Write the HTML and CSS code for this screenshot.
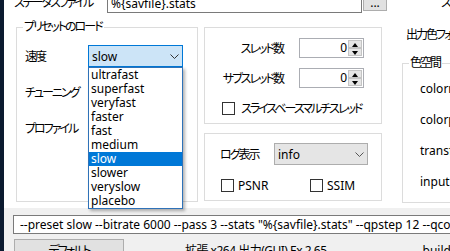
FILE: index.html
```html
<!DOCTYPE html>
<html lang="ja">
<head>
<meta charset="utf-8">
<title>x264 settings</title>
<link rel="stylesheet" href="styles.css">
</head>
<body>
<div class="screen">
  <div class="strip"></div>
  <div class="window">
    <div class="main">
      <div class="toprow">
        <span class="toplabel jp">ステータスファイル</span>
        <div class="textbox statfile">%{savfile}.stats</div>
        <button class="btn dots">...</button>
        <span class="topright jp">ステータス</span>
      </div>
      <div class="cols">
        <div class="group preset">
          <span class="legend jp">プリセットのロード</span>
          <div class="formgrid">
            <span class="lbl jp">速度</span>
            <div class="combo active"><span>slow</span><svg class="chev" width="9" height="5" viewBox="0 0 9 5"><path d="M0.5 0.5 L4.5 4.5 L8.5 0.5" fill="none" stroke="#333" stroke-width="1"/></svg></div>
            <span class="lbl jp">チューニング</span>
            <div class="combo"></div>
            <span class="lbl jp">プロファイル</span>
            <div class="combo"></div>
          </div>
          <ul class="droplist">
            <li>ultrafast</li>
            <li>superfast</li>
            <li>veryfast</li>
            <li>faster</li>
            <li>fast</li>
            <li>medium</li>
            <li class="sel">slow</li>
            <li>slower</li>
            <li>veryslow</li>
            <li>placebo</li>
          </ul>
        </div>
        <div class="midcol">
          <div class="group threads">
            <div class="threadgrid">
              <span class="rlbl jp">スレッド数</span>
              <div class="spin"><span class="val">0</span><span class="arrows"><span class="up"></span><span class="down"></span></span></div>
              <span class="rlbl jp">サブスレッド数</span>
              <div class="spin"><span class="val">0</span><span class="arrows"><span class="up"></span><span class="down"></span></span></div>
              <label class="check wide jp"><span class="box"></span>スライスベースマルチスレッド</label>
            </div>
          </div>
          <div class="group log">
            <div class="logrow">
              <span class="loglbl jp">ログ表示</span>
              <div class="combo logcombo"><span>info</span><svg class="chev" width="9" height="5" viewBox="0 0 9 5"><path d="M0.5 0.5 L4.5 4.5 L8.5 0.5" fill="none" stroke="#555" stroke-width="1"/></svg></div>
            </div>
            <div class="checkrow">
              <label class="check psnr"><span class="box"></span>PSNR</label>
              <label class="check"><span class="box"></span>SSIM</label>
            </div>
          </div>
        </div>
        <div class="rightcol">
          <div class="outlabel jp">出力色フォーマット</div>
          <div class="group color">
            <span class="legend jp">色空間</span>
            <div class="colorlist">
              <span>colormatrix</span>
              <span>colorprim</span>
              <span>transfer</span>
              <span>input range</span>
            </div>
          </div>
        </div>
      </div>
    </div>
    <div class="bottom">
      <div class="cmdline">--preset slow --bitrate 6000 --pass 3 --stats "%{savfile}.stats" --qpstep 12 --qcomp 0.60</div>
      <div class="footer">
        <button class="btn default jp">デフォルト</button>
        <span class="ver">拡張 x264 出力(GUI) Ex 2.65</span>
        <span class="build">build 2210</span>
      </div>
    </div>
  </div>
</div>
</body>
</html>
```
FILE: styles.css
```css
* { box-sizing: border-box; }
html, body { margin: 0; padding: 0; }
body {
  width: 450px;
  height: 251px;
  overflow: hidden;
  font-family: "Noto Sans", "Noto Sans CJK JP", sans-serif;
  font-size: 12px;
  color: #000;
  background: #f0f0f0;
  font-feature-settings: "palt";
}
.jp { letter-spacing: -2px; }
.screen { display: flex; height: 251px; }
.strip { width: 4px; flex: none; background: #0b1a2f; }
.window { flex: 1; display: flex; flex-direction: column; min-width: 0; overflow: hidden; }
.main { height: 208px; flex: none; background: #fff; position: relative; z-index: 2; }

.toprow { display: flex; align-items: flex-start; height: 21px; margin-top: -8px; padding-left: 10px; white-space: nowrap; }
.toplabel { width: 93px; flex: none; line-height: 16px; padding-top: 3px; }
.textbox { border: 1px solid #7a7a7a; background: #fff; }
.statfile { width: 255px; height: 21px; flex: none; padding: 2px 3px 0; line-height: 17px; }
.btn { font: inherit; color: #000; background: #e1e1e1; border: 1px solid #adadad; padding: 0; margin: 0; }
.dots { width: 24px; height: 19px; flex: none; margin-left: 1px; line-height: 12px; padding-top: 2px; }
.topright { flex: none; margin-left: 54px; line-height: 16px; padding-top: 3px; }

.cols { display: flex; align-items: flex-start; margin-top: 14px; padding-left: 12px; }
.group { border: 1px solid #dcdcdc; position: relative; }
.legend { position: absolute; top: -8px; left: 6px; padding: 0 2px 0 1px; background: #fff; line-height: 14px; white-space: nowrap; }

.preset { width: 182px; height: 175px; flex: none; padding: 17px 0 0 8px; }
.formgrid { display: grid; grid-template-columns: 63px 95px; grid-auto-rows: 22px; row-gap: 14px; align-items: center; }
.lbl { white-space: nowrap; }
.combo { display: flex; align-items: center; justify-content: space-between; height: 22px; border: 1px solid #adadad; background: #e5e5e5; padding: 0 3px 0 3px; letter-spacing: 0; }
.combo.active { background: #cce4f7; border-color: #0078d7; }
.chev { display: block; flex: none; }

.droplist { position: absolute; left: 71px; top: 39px; width: 95px; margin: 0; padding: 0; list-style: none; background: #fff; border: 1px solid #2f72b8; box-shadow: 2px 2px 3px rgba(0, 0, 0, 0.3); z-index: 5; }
.droplist li { height: 14px; line-height: 14px; padding-left: 2px; }
.droplist li.sel { background: #0078d7; color: #fff; }

.midcol { width: 178px; flex: none; margin-left: 6px; display: flex; flex-direction: column; gap: 9px; }
.threads { height: 97px; padding: 10px 0 0 17px; }
.threadgrid { display: grid; grid-template-columns: 61px 65px; column-gap: 16px; grid-auto-rows: 20px; row-gap: 10px; align-items: center; }
.rlbl { text-align: right; white-space: nowrap; }
.spin { display: flex; height: 20px; border: 1px solid #abadb3; background: #fff; padding: 1px; letter-spacing: 0; }
.val { flex: 1; text-align: right; line-height: 16px; padding-right: 1px; }
.arrows { width: 14px; display: flex; flex-direction: column; }
.arrows span { flex: 1; background: #e5e5e5; border: 1px solid #c4c4c4; position: relative; }
.arrows .up::after, .arrows .down::after { content: ""; position: absolute; left: 3px; width: 0; height: 0; border-left: 3px solid transparent; border-right: 3px solid transparent; }
.arrows .up::after { top: 2px; border-bottom: 4px solid #000; }
.arrows .down::after { top: 2px; border-top: 4px solid #000; }

.check { display: flex; align-items: center; white-space: nowrap; }
.check.wide { grid-column: 1 / 3; }
.box { width: 13px; height: 13px; border: 1px solid #333; background: #fff; margin-right: 4px; flex: none; }
.check.wide .box { margin-right: 6px; }

.log { height: 68px; padding: 9px 0 0 15px; }
.logrow { display: flex; align-items: center; }
.loglbl { width: 54px; white-space: nowrap; }
.logcombo { width: 94px; }
.checkrow { display: flex; margin-top: 13px; padding-left: 1px; height: 14px; }
.psnr { width: 89px; }

.rightcol { flex: none; width: 100px; margin-left: 20px; }
.outlabel { line-height: 14px; margin-top: 1px; padding-left: 4px; white-space: nowrap; }
.color { margin-top: 21px; height: 140px; padding: 18px 0 0 17px; }
.colorlist { display: flex; flex-direction: column; gap: 17px; }
.colorlist span { line-height: 14px; white-space: nowrap; }

.bottom { flex: 1; background: #f0f0f0; padding: 7px 0 0 9px; }
.cmdline { width: 520px; height: 19px; border: 1px solid #7a7a7a; background: #fff; padding-left: 6px; line-height: 17px; white-space: nowrap; }
.footer { display: flex; align-items: flex-start; margin-top: 5px; padding-left: 1px; white-space: nowrap; }
.default { width: 110px; height: 23px; flex: none; line-height: 20px; }
.ver { margin-left: 61px; line-height: 16px; padding-top: 4px; letter-spacing: -0.5px; }
.build { margin-left: 96px; line-height: 16px; padding-top: 4px; }
```
